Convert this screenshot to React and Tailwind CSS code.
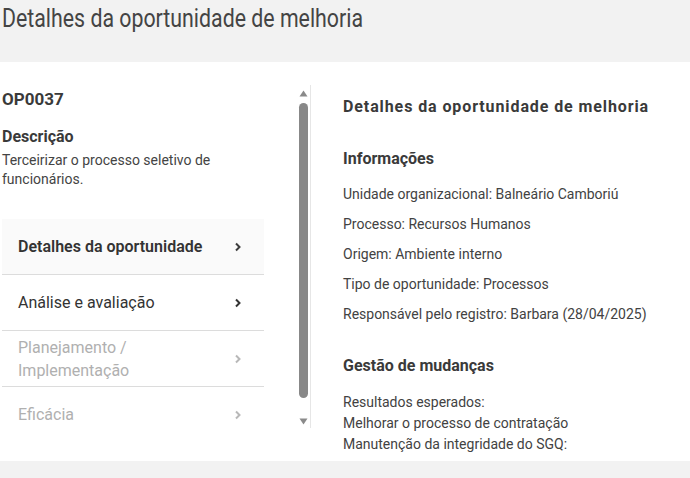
import React from "react";

function Chevron({ color }) {
  return (
    <svg width="8" height="10" viewBox="0 0 8 10" className="shrink-0">
      <path d="M2 1.5 L5.5 5 L2 8.5" fill="none" stroke={color} strokeWidth="2" />
    </svg>
  );
}

function NavItem({ children, active, disabled, bold }) {
  return (
    <div
      className={`flex h-[56px] items-center justify-between border-b border-[#dcdcdc] pl-4 pr-[22px] text-[16px] ${
        active ? "bg-[#fafafa]" : ""
      } ${disabled ? "text-[#b0b0b0]" : "text-[#333]"} ${bold ? "font-semibold text-[#3d3d3d]" : ""}`}
    >
      <div className="leading-[23px]">{children}</div>
      <Chevron color={disabled ? "#b8b8b8" : bold ? "#3d3d3d" : "#333"} />
    </div>
  );
}

export default function App() {
  const infos = [
    "Unidade organizacional: Balneário Camboriú",
    "Processo: Recursos Humanos",
    "Origem: Ambiente interno",
    "Tipo de oportunidade: Processos",
    "Responsável pelo registro: Barbara (28/04/2025)",
  ];
  return (
    <div className="flex h-[478px] w-[690px] flex-col overflow-hidden bg-white font-['Roboto',sans-serif] text-[#424242]">
      <header className="h-[62px] shrink-0 bg-[#f2f2f2] pl-[2px] pt-[3px]">
        <h1 className="origin-left scale-x-[0.82] whitespace-nowrap text-[26px] leading-[30px] text-[#444]">
          Detalhes da oportunidade de melhoria
        </h1>
      </header>

      <main className="flex h-[399px] shrink-0 pt-[23px]">
        <section className="flex h-[343px] w-[311px] shrink-0 border-r border-[#e6e6e6]">
          <div className="w-[264px] shrink-0 overflow-hidden pl-[2px]">
            <div className="pt-[4px] text-[17px] font-bold leading-[20px] text-[#3a3a3a]">OP0037</div>
            <div className="mt-[19px] text-[16px] font-bold leading-[18px] text-[#3a3a3a]">Descrição</div>
            <p className="mt-[5px] text-[14px] leading-[19px] text-[#444]">
              Terceirizar o processo seletivo de funcionários.
            </p>
            <nav className="mt-[30px] w-[262px]">
              <NavItem active bold>Detalhes da oportunidade</NavItem>
              <NavItem>Análise e avaliação</NavItem>
              <NavItem disabled>
                Planejamento /<br />Implementação
              </NavItem>
              <NavItem disabled>Eficácia</NavItem>
            </nav>
          </div>
          <div className="flex-1" />
          <div className="mr-[2px] flex w-[9px] flex-col items-center pt-[5px]">
            <svg width="9" height="7" viewBox="0 0 9 7">
              <path d="M4.5 0.5 L8.5 6.5 L0.5 6.5 Z" fill="#8a8a8a" />
            </svg>
            <div className="mt-[6px] h-[295px] w-[9px] rounded-full bg-[#888]" />
            <svg width="9" height="7" viewBox="0 0 9 7" className="mt-[20px]">
              <path d="M0.5 0.5 L8.5 0.5 L4.5 6.5 Z" fill="#8a8a8a" />
            </svg>
          </div>
        </section>

        <section className="min-w-0 flex-1 overflow-hidden pl-[32px] pt-[12px]">
          <h2 className="whitespace-nowrap text-[16px] font-bold leading-[20px] tracking-[0.9px] text-[#3a3a3a]">
            Detalhes da oportunidade de melhoria
          </h2>
          <h3 className="mt-[32px] text-[16px] font-bold leading-[20px] text-[#3a3a3a]">Informações</h3>
          <div className="mt-[15px] flex flex-col gap-[10px] text-[14px] leading-[20px]">
            {infos.map((t) => (
              <div key={t}>{t}</div>
            ))}
          </div>
          <h3 className="mt-[32px] text-[16px] font-bold leading-[20px] text-[#3a3a3a]">Gestão de mudanças</h3>
          <div className="mt-[16px] text-[14px] leading-[21px]">
            <div>Resultados esperados:</div>
            <div>Melhorar o processo de contratação</div>
            <div>Manutenção da integridade do SGQ:</div>
          </div>
        </section>
      </main>

      <footer className="flex-1 bg-[#f2f2f2]" />
    </div>
  );
}
